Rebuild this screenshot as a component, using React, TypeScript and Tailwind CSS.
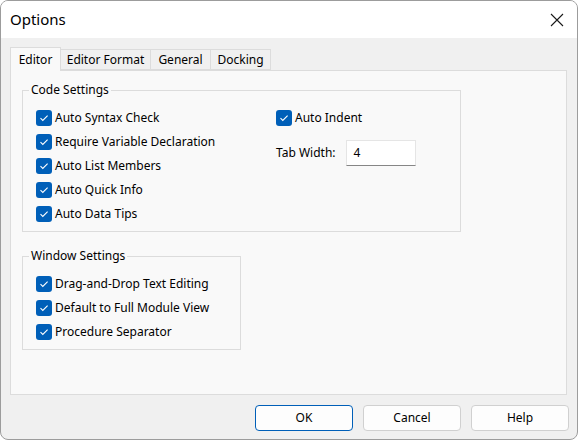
import React from "react";

const font = { fontFamily: '"Noto Sans", "Open Sans", sans-serif' };

const Check = ({ label }: { label: string }) => (
  <label className="flex h-[24px] items-center gap-[3px] text-[12px] text-black">
    <span className="flex h-[16px] w-[16px] items-center justify-center rounded-[3px] bg-[#005fb8]">
      <svg width="10" height="8" viewBox="0 0 10 8" fill="none">
        <path d="M1.5 4.2 L3.8 6.4 L8.6 1.6" stroke="#fff" strokeWidth="1.1" />
      </svg>
    </span>
    <span>{label}</span>
  </label>
);

const Button = ({ label, primary }: { label: string; primary?: boolean }) => (
  <button
    className={
      "h-[26px] w-[98px] rounded-[4px] bg-[#fdfdfd] text-[12px] text-black border " +
      (primary ? "border-[#005fb8]" : "border-[#d0d0d0]")
    }
  >
    {label}
  </button>
);

export default function App() {
  const tabs = ["Editor Format", "General", "Docking"];
  return (
    <div className="h-[440px] w-[579px] bg-white" style={font}>
      <div className="flex h-[440px] w-[578px] flex-col overflow-hidden rounded-[8px] border border-[#9c9c9c] bg-[#f0f0f0]">
        {/* Title bar */}
        <div className="flex h-[37px] shrink-0 items-center justify-between bg-white pl-[9px] pr-[13px]">
          <span className="text-[15px] text-black">Options</span>
          <svg width="14" height="14" viewBox="0 0 14 14">
            <path d="M1 1 L13 13 M13 1 L1 13" stroke="#1a1a1a" strokeWidth="1.1" />
          </svg>
        </div>

        <div className="flex flex-1 flex-col px-[9px] pt-[8px]">
          {/* Tabs */}
          <div className="relative z-10 flex h-[24px] items-end">
            <div className="-mb-px flex h-[24px] w-[51px] items-center justify-center border border-b-0 border-[#dcdcdc] bg-[#f9f9f9] text-[12px] text-black">
              Editor
            </div>
            {tabs.map((t, i) => (
              <div
                key={t}
                className={
                  "flex h-[21px] items-center justify-center border border-l-0 border-[#dcdcdc] text-[12px] text-black " +
                  (i === 0 ? "w-[90px]" : "w-[60px]")
                }
              >
                {t}
              </div>
            ))}
          </div>

          {/* Panel */}
          <div className="flex h-[325px] w-[557px] flex-col border border-[#dcdcdc] bg-[#f9f9f9] pl-[11px] pt-[11px]">
            <fieldset className="h-[150px] w-[439px] border border-[#dcdcdc] pl-[13px]">
              <legend className="ml-[-7px] px-[2px] text-[12px] leading-[16px] text-black">Code Settings</legend>
              <div className="flex pt-[8px]">
                <div className="flex w-[240px] flex-col">
                  <Check label="Auto Syntax Check" />
                  <Check label="Require Variable Declaration" />
                  <Check label="Auto List Members" />
                  <Check label="Auto Quick Info" />
                  <Check label="Auto Data Tips" />
                </div>
                <div className="flex flex-col">
                  <Check label="Auto Indent" />
                  <div className="mt-[10px] flex items-center gap-[10px] text-[12px] text-black">
                    <span>Tab Width:</span>
                    <div className="flex h-[26px] w-[70px] items-center border border-[#e5e5e5] border-b-[#868686] bg-white pl-[7px]">
                      4
                    </div>
                  </div>
                </div>
              </div>
            </fieldset>

            <fieldset className="mt-[16px] h-[102px] w-[219px] border border-[#dcdcdc] pl-[13px]">
              <legend className="ml-[-7px] px-[2px] text-[12px] leading-[16px] text-black">Window Settings</legend>
              <div className="flex flex-col pt-[8px]">
                <Check label="Drag-and-Drop Text Editing" />
                <Check label="Default to Full Module View" />
                <Check label="Procedure Separator" />
              </div>
            </fieldset>
          </div>

          {/* Buttons */}
          <div className="mr-[-1px] mt-[10px] flex justify-end gap-[10px]">
            <Button label="OK" primary />
            <Button label="Cancel" />
            <Button label="Help" />
          </div>
        </div>
      </div>
    </div>
  );
}
